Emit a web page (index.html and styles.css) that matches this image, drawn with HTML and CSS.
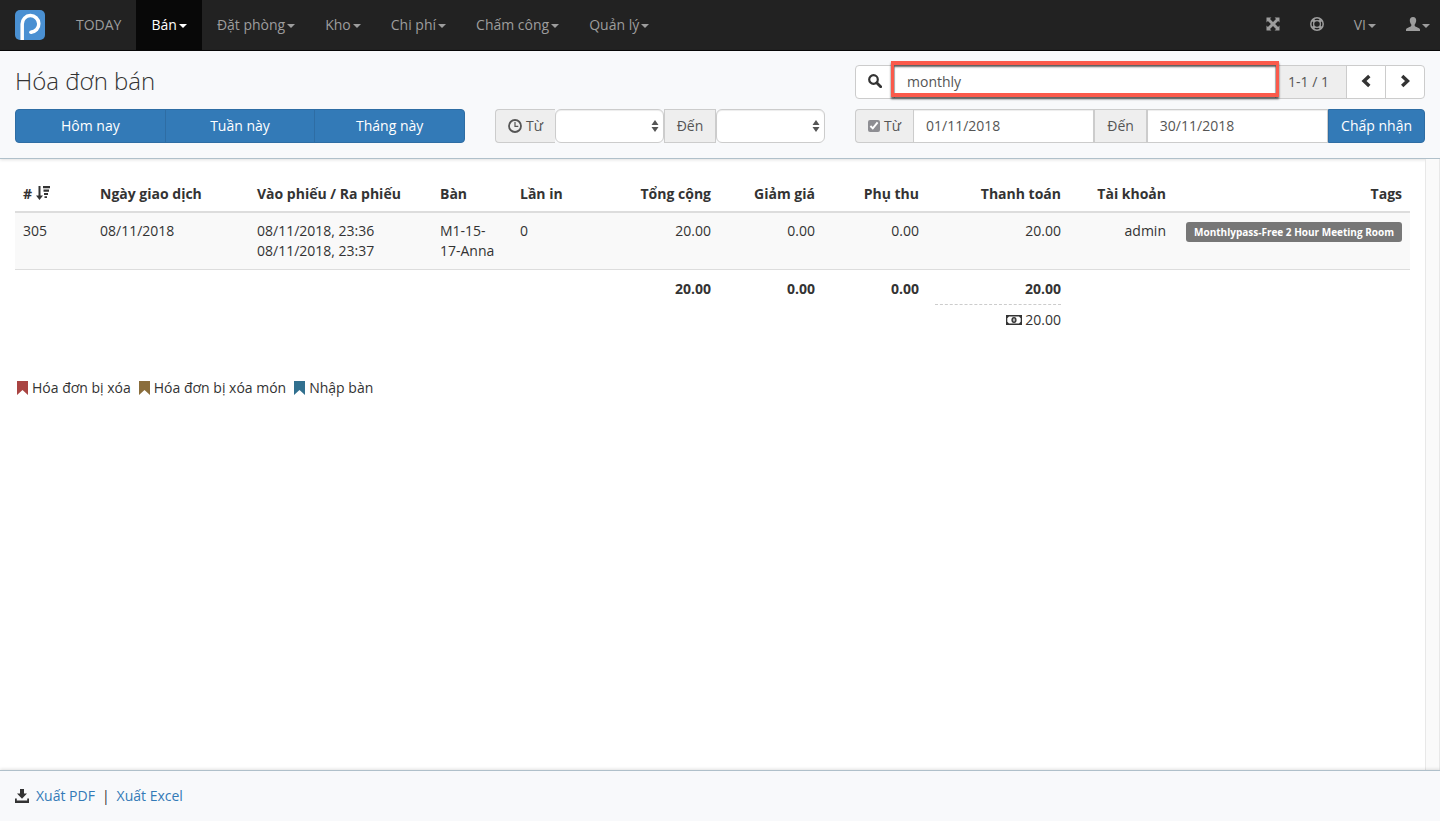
FILE: index.html
```html
<!DOCTYPE html>
<html lang="vi">
<head>
<meta charset="utf-8">
<meta name="viewport" content="width=device-width, initial-scale=1">
<title>Hóa đơn bán</title>
<link rel="stylesheet" href="styles.css">
</head>
<body>
<nav class="navbar">
  <a class="brand" href="#" aria-label="Trang chủ">
    <svg width="30" height="30" viewBox="0 0 30 30"><rect width="30" height="30" rx="5" fill="#4a90d2"/><path d="M7.200 30V14a8.300 8.300 0 1 1 8.700 8.200" fill="none" stroke="#fff" stroke-width="3.500"/><circle cx="15.900" cy="22.200" r="1.750" fill="#fff"/></svg>
  </a>
  <a class="nav-link" href="#">TODAY</a>
  <a class="nav-link active" href="#">Bán<span class="caret"></span></a>
  <a class="nav-link" href="#">Đặt phòng<span class="caret"></span></a>
  <a class="nav-link" href="#">Kho<span class="caret"></span></a>
  <a class="nav-link" href="#">Chi phí<span class="caret"></span></a>
  <a class="nav-link" href="#">Chấm công<span class="caret"></span></a>
  <a class="nav-link" href="#">Quản lý<span class="caret"></span></a>
  <div class="nav-right">
    <a class="nav-link" href="#" aria-label="Toàn màn hình"><svg class="icon" viewBox="0 0 14 14"><path d="M.5.500h4.900L4 1.900 7 4.900l3-3L8.600.500h4.900v4.900L12.100 4l-3 3 3 3 1.400-1.400v4.900H8.600l1.400-1.400-3-3-3 3 1.400 1.400H.5V8.600L1.900 10l3-3-3-3L.5 5.400z"/></svg></a>
    <a class="nav-link" href="#" aria-label="Trợ giúp"><svg class="icon" viewBox="0 0 14 14"><g fill="none" stroke="currentColor"><circle cx="7" cy="7" r="6.200" stroke-width="1.500"/><circle cx="7" cy="7" r="3.400" stroke-width="1.300"/><path d="M2.600 2.600l2.100 2.100M11.400 2.600L9.300 4.700M2.600 11.400l2.100-2.100M11.400 11.400L9.300 9.300" stroke-width="3"/></g></svg></a>
    <a class="nav-link" href="#">VI<span class="caret"></span></a>
    <a class="nav-link user" href="#" aria-label="Tài khoản"><svg class="icon" viewBox="0 0 14 14"><path d="M7 0c2.200 0 3.300 1.500 3.200 3.600-.1 1.800-.7 3-1.500 3.900v1.300c.3.700 1.500 1.100 2.800 1.600 1.600.6 2.500 1.100 2.500 2.300V14H0v-1.300c0-1.200.9-1.700 2.500-2.300 1.300-.5 2.500-.9 2.800-1.600V7.500C4.500 6.600 3.900 5.400 3.800 3.600 3.700 1.500 4.800 0 7 0z"/></svg><span class="caret"></span></a>
  </div>
</nav>

<header class="filters">
  <div class="cell title-cell"><h1 class="title">Hóa đơn bán</h1></div>
  <div class="cell">
    <form class="group">
      <button class="btn first" type="button" aria-label="Tìm"><svg class="icon" viewBox="0 0 14 14"><circle cx="5.500" cy="5.500" r="4.300" fill="none" stroke="currentColor" stroke-width="2.200"/><path d="M8.700 8.700l4 4" stroke="currentColor" stroke-width="2.800" stroke-linecap="round"/></svg></button>
      <div class="highlighted">
        <input class="field" type="text" value="monthly" aria-label="Tìm kiếm">
        <span class="highlight"></span>
      </div>
      <span class="addon count">1-1 / 1</span>
      <button class="btn" type="button" aria-label="Trang trước"><svg class="icon" viewBox="0 0 14 14"><path d="M10.300 2L5 7l5.300 5" fill="none" stroke="currentColor" stroke-width="3.400"/></svg></button>
      <button class="btn last" type="button" aria-label="Trang sau"><svg class="icon" viewBox="0 0 14 14"><path d="M4.200 2l5.300 5-5.300 5" fill="none" stroke="currentColor" stroke-width="3.400"/></svg></button>
    </form>
  </div>
  <div class="cell">
    <div class="presets">
      <button class="btn primary" type="button">Hôm nay</button>
      <button class="btn primary" type="button">Tuần này</button>
      <button class="btn primary" type="button">Tháng này</button>
    </div>
  </div>
  <div class="cell">
    <div class="group">
      <label class="addon first" for="time-from"><svg class="icon" viewBox="0 0 14 14"><g fill="none" stroke="currentColor"><circle cx="7" cy="7" r="6" stroke-width="1.800"/><path d="M7 3v4.300h3.300" stroke-width="1.200"/></g></svg>Từ</label>
      <div class="select-wrap"><select class="field select" id="time-from"><option></option></select><svg class="sorter" viewBox="0 0 8 14"><path d="M4 1l3.500 5h-7zM4 13l3.500-5h-7z"/></svg></div>
      <label class="addon middle" for="time-to">Đến</label>
      <div class="select-wrap"><select class="field select" id="time-to"><option></option></select><svg class="sorter" viewBox="0 0 8 14"><path d="M4 1l3.500 5h-7zM4 13l3.500-5h-7z"/></svg></div>
    </div>
  </div>
  <div class="cell">
    <form class="group">
      <label class="addon first"><input class="check" type="checkbox" checked>Từ</label>
      <input class="field" type="text" value="01/11/2018" aria-label="Từ ngày">
      <label class="addon middle" for="date-to">Đến</label>
      <input class="field" id="date-to" type="text" value="30/11/2018">
      <button class="btn primary last" type="button">Chấp nhận</button>
    </form>
  </div>
</header>

<main class="content">
  <div class="scroll">
    <table class="invoices">
      <colgroup><col class="c-id"><col class="c-date"><col class="c-time"><col class="c-table"><col class="c-print"><col class="c-total"><col class="c-money"><col class="c-money"><col class="c-paid"><col class="c-user"><col class="c-tags"></colgroup>
      <thead>
        <tr><th># <svg class="icon" viewBox="0 0 14 14"><path d="M2.500 0h2v9.500H7L3.500 14 0 9.500h2.500zM7 0h7v2.300H7zM7.500 3.500H13v2.200H7.500zM8 7h4v2H8zM8.500 10.300H11v1.700H8.500z"/></svg></th><th>Ngày giao dịch</th><th>Vào phiếu / Ra phiếu</th><th>Bàn</th><th>Lần in</th><th class="num">Tổng cộng</th><th class="num">Giảm giá</th><th class="num">Phụ thu</th><th class="num">Thanh toán</th><th class="num">Tài khoản</th><th class="num">Tags</th></tr>
      </thead>
      <tbody>
        <tr><td>305</td><td>08/11/2018</td><td>08/11/2018, 23:36<br>08/11/2018, 23:37</td><td>M1-15-<br>17-Anna</td><td>0</td><td class="num">20.00</td><td class="num">0.00</td><td class="num">0.00</td><td class="num">20.00</td><td class="num">admin</td><td class="num"><span class="tag">Monthlypass-Free 2 Hour Meeting Room</span></td></tr>
      </tbody>
      <tfoot>
        <tr><td colspan="5"></td><td class="num"><b>20.00</b></td><td class="num"><b>0.00</b></td><td class="num"><b>0.00</b></td><td class="num"><b>20.00</b><div class="cash"><svg class="cash-icon" viewBox="0 0 16 12"><path d="M0 1h16v10H0zM3 2.500L1.300 4.200v3.600L3 9.500h10l1.700-1.700V4.200L13 2.500z" fill-rule="evenodd"/><ellipse cx="8" cy="6" rx="2.600" ry="3"/><path d="M6.800 6h2.400M8 4.300v3.400" stroke="#fff" stroke-width=".8"/></svg> 20.00</div></td><td></td><td></td></tr>
      </tfoot>
    </table>
    <div class="legend">
      <span class="key deleted"><svg class="mark" viewBox="0 0 11 14"><path d="M0 0h11v14L5.500 9 0 14z"/></svg>Hóa đơn bị xóa</span>
      <span class="key item"><svg class="mark" viewBox="0 0 11 14"><path d="M0 0h11v14L5.500 9 0 14z"/></svg>Hóa đơn bị xóa món</span>
      <span class="key merged"><svg class="mark" viewBox="0 0 11 14"><path d="M0 0h11v14L5.500 9 0 14z"/></svg>Nhập bàn</span>
    </div>
  </div>
  <div class="track"></div>
</main>

<footer class="footer">
  <svg class="icon" viewBox="0 0 14 14"><path d="M5 0h4v4.500h3L7 9.700 2 4.500h3zM0 9.500h1.800v2h10.400v-2H14V14H0z"/></svg>
  <a href="#">Xuất PDF</a><span>|</span><a href="#">Xuất Excel</a>
</footer>
</body>
</html>
```
FILE: styles.css
```css
* { box-sizing: border-box; }

body {
  margin: 0;
  min-height: 100vh;
  display: flex;
  flex-direction: column;
  background: #fff;
  color: #333;
  font: 14px/20px "Open Sans", "Noto Sans", sans-serif;
}

button, input, select { font: inherit; color: inherit; margin: 0; }
a { color: #337ab7; text-decoration: none; }

.icon { width: 14px; height: 14px; fill: currentColor; vertical-align: -1px; }
.caret {
  display: inline-block;
  margin-left: 2px;
  vertical-align: middle;
  border: 4px solid transparent;
  border-top-color: currentColor;
  border-bottom: 0;
}

/* Top navigation */
.navbar {
  display: flex;
  background: #222;
  border-bottom: 1px solid #080808;
}
.brand { display: flex; padding: 10px 0 10px 15px; margin-right: 16px; }
.nav-link { padding: 15px; color: #9d9d9d; white-space: nowrap; }
.nav-link.active { background: #080808; color: #fff; }
.nav-right { display: flex; margin-left: auto; }
.nav-link.user { padding-right: 10px; }

/* Filter header */
.filters {
  display: grid;
  grid-template-columns: 4fr 3fr 5fr;
  row-gap: 10px;
  padding: 14px 0 15px;
  background: #f8f9fb;
  border-bottom: 1px solid #b0c0ca;
  box-shadow: 0 1px 3px rgba(0, 0, 0, .12);
}
.cell { padding: 0 15px; min-width: 0; }
.title-cell { grid-column: span 2; }
.title { margin: 0; font-size: 24px; line-height: 32px; font-weight: 300; }

.group, .presets { display: flex; }
.presets .btn { flex: 1; }
.presets .btn:first-child { border-radius: 4px 0 0 4px; }
.presets .btn:last-child { border-radius: 0 4px 4px 0; }

.btn {
  height: 34px;
  padding: 6px 12px;
  border: 1px solid #ccc;
  background: #fff;
  line-height: 20px;
  white-space: nowrap;
}
.btn + .btn { margin-left: -1px; }
.btn.primary { background: #337ab7; border-color: #2e6da4; color: #fff; }
.first { border-radius: 4px 0 0 4px; }
.last { border-radius: 0 4px 4px 0; }

.field {
  flex: 1;
  width: 100%;
  min-width: 0;
  height: 34px;
  padding: 5px 12px 7px;
  border: 1px solid #ccc;
  background: #fff;
  color: #555;
  box-shadow: inset 0 1px 1px rgba(0, 0, 0, .075);
}
.addon {
  display: flex;
  align-items: center;
  gap: 4px;
  height: 34px;
  padding: 6px 12px;
  border: 1px solid #ccc;
  border-width: 1px 0;
  background: #eee;
  color: #555;
  white-space: nowrap;
}
.addon.first { border-left-width: 1px; }
.addon.middle { border-width: 1px; }
.addon.count { min-width: 70px; }
.check { width: 12px; height: 12px; accent-color: #8e8e93; }

.select-wrap { position: relative; flex: 1; }
.select { appearance: none; border-radius: 6px; display: block; }
.sorter {
  position: absolute;
  right: 5px;
  top: 10px;
  width: 8px;
  height: 14px;
  fill: #555;
  pointer-events: none;
}

.highlighted { position: relative; flex: 1; display: flex; margin-left: -1px; }
.highlight {
  position: absolute;
  inset: -4px -3px 2px -3px;
  border: 4px solid #fb5a4b;
  border-width: 4px 3px;
  box-shadow: 0 2px 2px rgba(0, 0, 0, .65), inset 0 2px 2px rgba(0, 0, 0, .55);
  pointer-events: none;
}

/* Invoice list */
.content { flex: 1; display: flex; }
.scroll { flex: 1; min-width: 0; padding: 16px 15px; }
.track { width: 15px; background: #fafafa; border: 1px solid #e8e8e8; border-width: 0 1px; }

.invoices { width: 100%; table-layout: fixed; border-collapse: separate; border-spacing: 0; }
.c-id { width: 77px; }
.c-date { width: 157px; }
.c-time { width: 183px; }
.c-table, .c-print { width: 80px; }
.c-total { width: 127px; }
.c-money { width: 104px; }
.c-paid { width: 142px; }
.c-user { width: 105px; }
.c-tags { width: 236px; }
.invoices th, .invoices td { padding: 8px; text-align: left; vertical-align: top; white-space: nowrap; }
.invoices th { padding: 9px 8px 7px; border-bottom: 2px solid #ddd; }
.invoices tbody td { background: #f9f9f9; border-bottom: 1px solid #ddd; }
.invoices tfoot td { padding-top: 9px; }
.invoices .num { text-align: right; }
.tag {
  display: inline-block;
  padding: 0 8px;
  border-radius: 3px;
  background: #777;
  color: #fff;
  font-size: 10px;
  font-weight: 700;
  vertical-align: top;
  margin-top: 1px;
}
.cash { margin-top: 5px; padding-top: 5px; border-top: 1px dashed #ccc; }
.cash-icon { width: 16px; height: 12px; fill: #333; vertical-align: -1px; }

.legend { display: flex; gap: 8px; margin-top: 40px; padding-left: 2px; }
.key { display: flex; align-items: center; gap: 4px; }
.mark { width: 11px; height: 14px; fill: currentColor; }
.deleted .mark { color: #a94442; }
.item .mark { color: #8a6d3b; }
.merged .mark { color: #31708f; }

/* Export footer */
.footer {
  display: flex;
  align-items: center;
  gap: 7px;
  padding: 15px;
  background: #f8f9fb;
  border-top: 1px solid #b0c0ca;
  box-shadow: 0 -1px 3px rgba(0, 0, 0, .12);
}
```
